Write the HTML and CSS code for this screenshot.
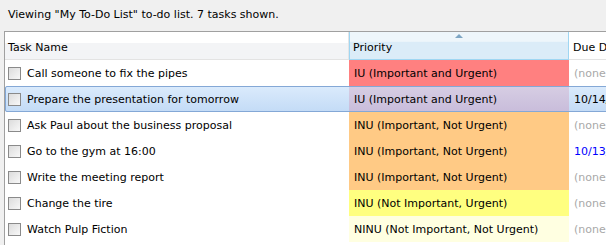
FILE: index.html
```html
<!DOCTYPE html>
<html lang="en">

<head>
    <meta charset="UTF-8">
    <title>To-Do List</title>
    <link rel="stylesheet" href="styles.css">
</head>

<body>
    <div class="status">Viewing "My To-Do List" to-do list. 7 tasks shown.</div>

    <div class="grid">
        <!-- Header -->
        <div class="row head">
            <div class="cell name">Task Name</div>
            <div class="cell prio sorted"><span class="arrow"></span>Priority</div>
            <div class="cell due">Due Date</div>
        </div>

        <div class="row">
            <div class="cell name"><span class="check"></span>Call someone to fix the pipes</div>
            <div class="cell prio iu">IU (Important and Urgent)</div>
            <div class="cell due none">(none)</div>
        </div>
        <div class="row selected">
            <div class="cell name"><span class="check"></span>Prepare the presentation for tomorrow</div>
            <div class="cell prio iu">IU (Important and Urgent)</div>
            <div class="cell due">10/14/2009</div>
        </div>
        <div class="row">
            <div class="cell name"><span class="check"></span>Ask Paul about the business proposal</div>
            <div class="cell prio inu">INU (Important, Not Urgent)</div>
            <div class="cell due none">(none)</div>
        </div>
        <div class="row">
            <div class="cell name"><span class="check"></span>Go to the gym at 16:00</div>
            <div class="cell prio inu">INU (Important, Not Urgent)</div>
            <div class="cell due soon">10/13/2009</div>
        </div>
        <div class="row">
            <div class="cell name"><span class="check"></span>Write the meeting report</div>
            <div class="cell prio inu">INU (Important, Not Urgent)</div>
            <div class="cell due none">(none)</div>
        </div>
        <div class="row">
            <div class="cell name"><span class="check"></span>Change the tire</div>
            <div class="cell prio niu">INU (Not Important, Urgent)</div>
            <div class="cell due none">(none)</div>
        </div>
        <div class="row">
            <div class="cell name"><span class="check"></span>Watch Pulp Fiction</div>
            <div class="cell prio ninu">NINU (Not Important, Not Urgent)</div>
            <div class="cell due none">(none)</div>
        </div>
    </div>
</body>

</html>
```

FILE: styles.css
```css
body {
  margin: 0;
  background-color: #f0f0f0;
  font-family: "DejaVu Sans", Verdana, sans-serif;
  font-size: 11px;
  color: #000;
  overflow: hidden;
}
.status {
  height: 31px;
  padding-left: 8px;
  line-height: 29px;
}
.grid {
  margin-left: 4px;
  width: 700px;
  border-left: 1px solid #a0a0a0;
  border-top: 1px solid #a0a0a0;
  background-color: #ffffff;
  padding-bottom: 3px;
}
.row {
  display: grid;
  grid-template-columns: 344px 220px 1fr;
  height: 26px;
}
.cell {
  display: flex;
  align-items: center;
  white-space: nowrap;
  overflow: hidden;
}
.name {
  padding-left: 3px;
}
.prio {
  padding-left: 5px;
}
.due {
  padding-left: 5px;
}

/* header */
.head {
  height: 27px;
  border-bottom: 1px solid #e3e3e3;
  background: linear-gradient(#ffffff 0%, #ffffff 40%, #f3f4f6 41%, #f3f4f6 100%);
}
.head .cell {
  align-items: flex-end;
  padding-bottom: 5px;
  border-right: 1px solid #e3e5e7;
}
.head .name {
  padding-left: 3px;
}
.head .prio {
  position: relative;
  padding-left: 3px;
}
.head .due {
  padding-left: 4px;
  border-right: none;
  background: #ffffff;
}
.head .sorted {
  background: linear-gradient(#eef6fb 0%, #eef6fb 35%, #dbecf8 36%, #dbecf8 100%);
  border: 1px solid #9fd6f2;
  border-top: none;
  margin-bottom: -1px;
}
.arrow {
  position: absolute;
  top: 2px;
  left: 105px;
  width: 0;
  height: 0;
  border-left: 4px solid transparent;
  border-right: 4px solid transparent;
  border-bottom: 4px solid #7ea6c4;
}

/* checkbox */
.check {
  display: inline-block;
  width: 11px;
  height: 11px;
  border: 1px solid #8a8a8a;
  background: linear-gradient(135deg, #dcdcdc, #f8f8f8);
  margin-right: 6px;
  box-sizing: content-box;
  flex: none;
}

/* priority colours */
.iu {
  background-color: #ff8080;
}
.inu {
  background-color: #ffca85;
}
.niu {
  background-color: #ffff80;
}
.ninu {
  background-color: #ffffe1;
}
.none {
  color: #a8a8a8;
}
.soon {
  color: #0000ff;
}

/* selected row */
.selected {
  background: linear-gradient(#dbebfc, #c3dbf6);
  outline: 1px solid #84a8d6;
  outline-offset: -1px;
  border-radius: 2px;
}
.selected .prio {
  background: linear-gradient(#d6cde3, #c9bddb);
  border-top: 1px solid #84a8d6;
  border-bottom: 1px solid #84a8d6;
}
```
